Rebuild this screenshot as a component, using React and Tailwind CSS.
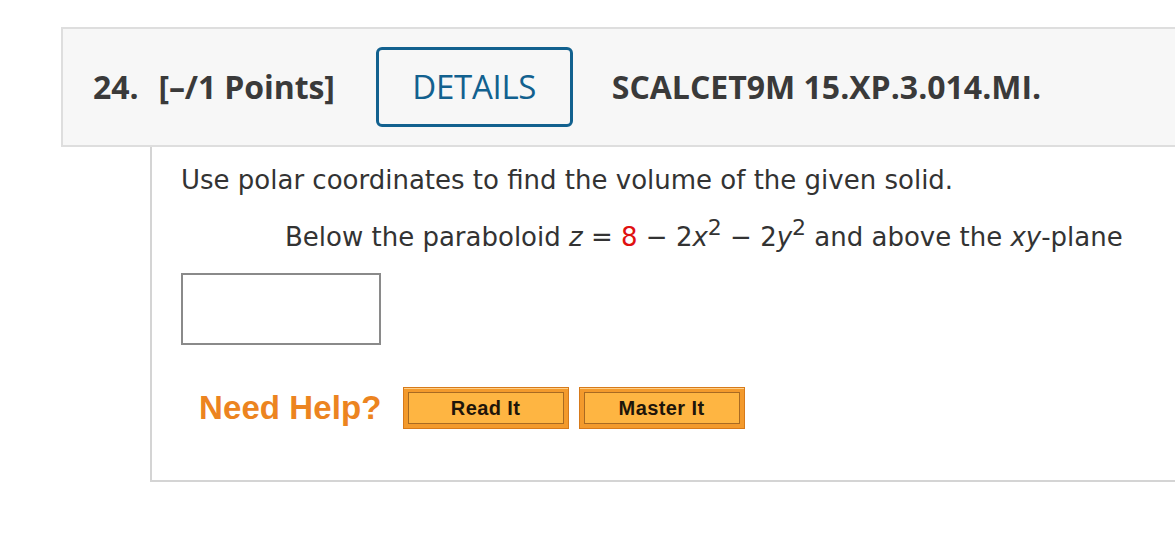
export default function App() {
  return (
    <div className="w-[1175px] h-[559px] overflow-hidden bg-white">
      {/* Question header */}
      <div className="ml-[61px] mt-[27px] w-[1200px] h-[120px] bg-[#f7f7f7] border-2 border-[#dedede] flex items-center pl-[30px] font-['Open_Sans',sans-serif] text-[#3a3a3a]">
        <span className="text-[32px] font-bold tracking-[-0.1px]">24.</span>
        <span className="ml-[20px] text-[32px] font-bold tracking-[-0.1px]">[–/1 Points]</span>
        <div className="ml-[41px] w-[197px] h-[80px] border-[3px] border-[#12618f] rounded-[6px] flex items-center justify-center bg-[#f7f7f7]">
          <span className="text-[33px] text-[#12618f] tracking-[-0.3px]">DETAILS</span>
        </div>
        <span className="ml-[39px] text-[32px] font-bold">SCALCET9M 15.XP.3.014.MI.</span>
      </div>

      {/* Question body */}
      <div className="ml-[150px] w-[1100px] h-[335px] border-l-2 border-b-2 border-[#d4d4d4] pl-[29px] pt-[17px] font-['DejaVu_Sans',Verdana,sans-serif] text-[#333] text-[26px]">
        <p className="leading-[32px]">Use polar coordinates to find the volume of the given solid.</p>
        <p className="mt-[25px] ml-[104px] leading-[32px]">
          Below the paraboloid <i>z</i> = <span className="text-[#e01010]">8</span> − 2<i>x</i>
          <sup className="text-[22px] top-[-0.5em]">2</sup> − 2<i>y</i>
          <sup className="text-[22px] top-[-0.5em]">2</sup> and above the <i>xy</i>-plane
        </p>
        <div className="mt-[20px] w-[200px] h-[72px] border-2 border-[#8a8a8a] bg-white"></div>
        <div className="mt-[38px] flex items-center">
          <span className="ml-[18px] font-['Liberation_Sans',Arial,sans-serif] font-bold text-[33px] text-[#ec8420] tracking-[0.1px]">Need Help?</span>
          <button className="ml-[21px] w-[166px] h-[42px] bg-[#f39a2c] border border-[#d77a1a] p-[4px] shadow-[inset_0_1px_0_#ffd08a]">
            <div className="w-full h-full bg-[#feb542] border border-[#a86a22] flex items-center justify-center font-['Liberation_Sans',Arial,sans-serif] font-bold text-[20px] text-[#1e150a] tracking-[0.4px]">Read It</div>
          </button>
          <button className="ml-[10px] w-[166px] h-[42px] bg-[#f39a2c] border border-[#d77a1a] p-[4px] shadow-[inset_0_1px_0_#ffd08a]">
            <div className="w-full h-full bg-[#feb542] border border-[#a86a22] flex items-center justify-center font-['Liberation_Sans',Arial,sans-serif] font-bold text-[20px] text-[#1e150a] tracking-[0.4px]">Master It</div>
          </button>
        </div>
      </div>
    </div>
  );
}
